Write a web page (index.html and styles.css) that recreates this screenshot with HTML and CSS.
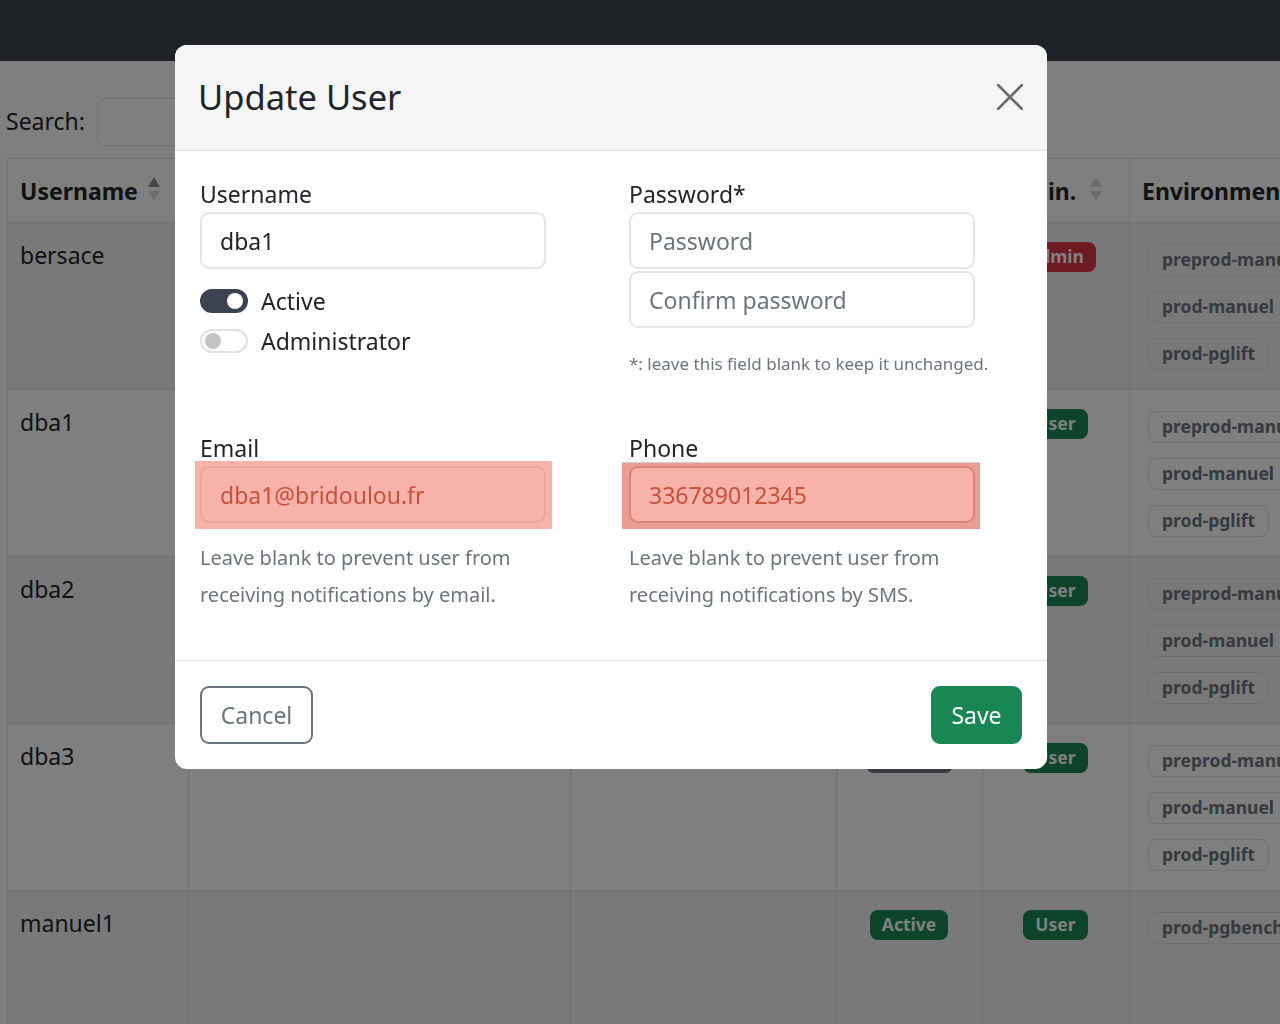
FILE: index.html
```html
<!DOCTYPE html>
<html lang="en">
<head>
<meta charset="utf-8">
<title>Users</title>
<link rel="stylesheet" href="styles.css">
</head>
<body>
<nav class="navbar"></nav>
<main class="content">
  <div class="search">
    <label class="search-label">Search:</label>
    <input class="search-input" type="search">
  </div>
  <table class="users">
    <colgroup>
      <col class="c1"><col class="c2"><col class="c3"><col class="c4"><col class="c5"><col class="c6">
    </colgroup>
    <thead>
      <tr>
        <th><div class="th-inner"><span>Username</span><svg class="sort" width="12" height="28" viewBox="0 0 12 28"><polygon points="6,0 12,10 0,10" fill="#8a8d90"/><polygon points="0,14 12,14 6,24" fill="#d6d8da"/></svg></div></th>
        <th></th>
        <th></th>
        <th></th>
        <th><div class="th-inner th-right"><span>Admin.</span><svg class="sort" width="12" height="28" viewBox="0 0 12 28"><polygon points="6,0 12,10 0,10" fill="#d6d8da"/><polygon points="0,14 12,14 6,24" fill="#d6d8da"/></svg></div></th>
        <th><div class="th-inner"><span>Environments</span></div></th>
      </tr>
    </thead>
    <tbody>
      <tr>
        <td>bersace</td><td></td><td></td>
        <td class="center"></td>
        <td class="center"><span class="badge bg-danger">Admin</span></td>
        <td><div class="envs"><span class="env">preprod-manuel</span><span class="env">prod-manuel</span><span class="env">prod-pglift</span></div></td>
      </tr>
      <tr>
        <td>dba1</td><td></td><td></td>
        <td class="center"></td>
        <td class="center"><span class="badge bg-success">User</span></td>
        <td><div class="envs"><span class="env">preprod-manuel</span><span class="env">prod-manuel</span><span class="env">prod-pglift</span></div></td>
      </tr>
      <tr>
        <td>dba2</td><td></td><td></td>
        <td class="center"></td>
        <td class="center"><span class="badge bg-success">User</span></td>
        <td><div class="envs"><span class="env">preprod-manuel</span><span class="env">prod-manuel</span><span class="env">prod-pglift</span></div></td>
      </tr>
      <tr>
        <td>dba3</td><td></td><td></td>
        <td class="center"><span class="badge bg-secondary badge-hidden"></span></td>
        <td class="center"><span class="badge bg-success">User</span></td>
        <td><div class="envs"><span class="env">preprod-manuel</span><span class="env">prod-manuel</span><span class="env">prod-pglift</span></div></td>
      </tr>
      <tr>
        <td>manuel1</td><td></td><td></td>
        <td class="center"><span class="badge bg-success">Active</span></td>
        <td class="center"><span class="badge bg-success">User</span></td>
        <td><div class="envs"><span class="env">prod-pgbench</span></div></td>
      </tr>
    </tbody>
  </table>
</main>

<div class="backdrop"></div>

<div class="modal">
  <div class="modal-header">
    <h4 class="modal-title">Update User</h4>
    <button class="btn-close" type="button" aria-label="Close">
      <svg width="26" height="26" viewBox="0 0 26 26"><path d="M1 1 L25 25 M25 1 L1 25" stroke="#6c6c6c" stroke-width="2.6" stroke-linecap="round" fill="none"/></svg>
    </button>
  </div>
  <div class="modal-body">
    <div class="col">
      <label class="form-label">Username</label>
      <input class="form-control" type="text" value="dba1">
      <div class="check first">
        <span class="switch on"><span class="knob"></span></span>
        <span>Active</span>
      </div>
      <div class="check">
        <span class="switch"><span class="knob"></span></span>
        <span>Administrator</span>
      </div>
    </div>
    <div class="col">
      <label class="form-label">Password*</label>
      <input class="form-control" type="password" placeholder="Password">
      <input class="form-control second" type="password" placeholder="Confirm password">
      <div class="note">*: leave this field blank to keep it unchanged.</div>
    </div>
    <div class="col">
      <label class="form-label">Email</label>
      <div class="hl hl-email-wrap"><input class="form-control hl-email" type="text" value="dba1@bridoulou.fr"></div>
      <div class="form-text">Leave blank to prevent user from receiving notifications by email.</div>
    </div>
    <div class="col">
      <label class="form-label">Phone</label>
      <div class="hl hl-phone-wrap"><input class="form-control hl-phone" type="text" value="336789012345"></div>
      <div class="form-text">Leave blank to prevent user from receiving notifications by SMS.</div>
    </div>
  </div>
  <div class="modal-footer">
    <button class="btn btn-cancel" type="button">Cancel</button>
    <button class="btn btn-save" type="button">Save</button>
  </div>
</div>
</body>
</html>
```
FILE: styles.css
```css
* { box-sizing: border-box; }
html, body { margin: 0; padding: 0; }
body {
  width: 1280px;
  height: 1024px;
  overflow: hidden;
  position: relative;
  background: #fff;
  color: #212529;
  font-family: "Noto Sans", "DejaVu Sans", sans-serif;
  font-size: 23px;
  line-height: 36px;
}

/* Page underneath */
.navbar {
  height: 61px;
  background: #1f2226;
  position: relative;
  z-index: 1050;
}
.content { padding-left: 7px; }
.search {
  display: flex;
  align-items: center;
  height: 48px;
  margin-top: 37px;
  margin-left: -1px;
}
.search-label { width: 91px; margin-top: -3px; }
.search-input {
  width: 330px;
  height: 48px;
  border: 1px solid #dee2e6;
  border-radius: 9px;
  background: #fff;
}
.users {
  margin-top: 12px;
  border-collapse: collapse;
  table-layout: fixed;
  width: 1481px;
}
.c1 { width: 181px; }
.c2 { width: 382px; }
.c3 { width: 266px; }
.c4 { width: 146px; }
.c5 { width: 147px; }
.c6 { width: 359px; }
.users th, .users td {
  border: 1px solid #dee2e6;
  text-align: left;
  vertical-align: top;
  padding: 14px 13px 12px 12px;
}
.users thead tr { height: 64px; }
.users th {
  font-weight: 700;
  vertical-align: middle;
  padding: 0 28px 0 12px;
  white-space: nowrap;
}
.th-inner {
  display: flex;
  align-items: center;
  justify-content: space-between;
}
.th-right span { margin-left: auto; margin-right: 14px; }
.sort { flex: none; }
.users tbody tr { height: 167px; }
.users tbody tr:nth-child(odd) td { background: #f3f3f3; }
.users td.center { text-align: center; padding-top: 19px; }
.badge {
  display: inline-block;
  vertical-align: top;
  font-size: 17.5px;
  font-weight: 700;
  line-height: 1;
  color: #fff;
  padding: 6px 12px;
  border-radius: 8px;
}
.badge-hidden { width: 87px; height: 30px; }
.bg-success { background: #198754; }
.bg-danger { background: #dc3545; }
.bg-secondary { background: #6c757d; }
.envs {
  display: flex;
  flex-direction: column;
  align-items: flex-start;
  gap: 15px;
  padding: 7px 0 0 6px;
}
.env {
  display: inline-flex;
  align-items: center;
  height: 32px;
  padding: 0 13px;
  border: 1px solid #dee2e6;
  border-radius: 9px;
  font-size: 17.5px;
  font-weight: 700;
  line-height: 1;
  color: #6c757d;
  white-space: nowrap;
}

/* Backdrop */
.backdrop {
  position: fixed;
  inset: 0;
  background: rgba(0, 0, 0, 0.5);
  z-index: 1040;
}

/* Modal */
.modal {
  position: absolute;
  left: 175px;
  top: 45px;
  width: 872px;
  height: 724px;
  background: #fff;
  border-radius: 12px;
  overflow: hidden;
  z-index: 1060;
  display: flex;
  flex-direction: column;
}
.modal-header {
  flex: none;
  height: 106px;
  background: #f5f5f5;
  border-bottom: 1px solid #dee2e6;
  display: flex;
  align-items: center;
  justify-content: space-between;
  padding: 0 24px 2px 23px;
}
.modal-title {
  margin: 0;
  font-size: 34.5px;
  font-weight: 400;
  line-height: 1.2;
  color: #212529;
}
.btn-close {
  width: 26px;
  height: 26px;
  padding: 0;
  border: 0;
  background: transparent;
  display: flex;
}
.modal-body {
  flex: 1;
  display: grid;
  grid-template-columns: 429px 346px;
  row-gap: 54px;
  align-content: start;
  padding: 25px 24px 0 25px;
}
.col { display: flex; flex-direction: column; align-items: flex-start; }
.form-label { display: block; line-height: 36px; }
.form-control {
  width: 346px;
  height: 57px;
  border: 2px solid #e2e5e9;
  border-radius: 9px;
  padding: 0 18px;
  font-family: inherit;
  font-size: 23px;
  color: #212529;
  background: #fff;
  outline: none;
}
.form-control::placeholder { color: #6c757d; opacity: 1; }
.form-control.second { margin-top: 2px; }
.check {
  display: flex;
  align-items: center;
  gap: 13px;
  height: 36px;
  margin-top: 4px;
}
.check.first { margin-top: 14px; }
.switch {
  position: relative;
  width: 48px;
  height: 24px;
  border-radius: 12px;
  border: 2px solid #dee2e6;
  background: #fff;
  flex: none;
}
.switch .knob {
  position: absolute;
  top: 2px;
  left: 3px;
  width: 16px;
  height: 16px;
  border-radius: 50%;
  background: #c4c4c4;
}
.switch.on { background: #3b4350; border-color: #3b4350; }
.switch.on .knob { left: auto; right: 3px; background: #fff; }
.note {
  margin-top: 24px;
  font-size: 17px;
  line-height: 24px;
  color: #6c757d;
  white-space: nowrap;
}
.form-text {
  margin-top: 16px;
  font-size: 20px;
  line-height: 37px;
  color: #6c757d;
  width: 346px;
}
.hl { display: flex; }
.hl-email-wrap {
  background: #f7b3a9;
  padding: 5px 6px 6px 5px;
  margin: -5px -6px -6px -5px;
}
.hl-phone-wrap {
  background: #e99d93;
  padding: 3px 5px 6px 7px;
  margin: -4px -5px -6px -7px;
  border-top: 1px solid #cfcfcf;
}
.hl-email {
  background: #f7b3a9;
  border-color: #eda69c;
  color: #c6513c;
}
.hl-phone {
  background: #f7b3a9;
  border-color: #dd8377;
  color: #c6513c;
}
.modal-footer {
  flex: none;
  height: 109px;
  border-top: 1px solid #dee2e6;
  display: flex;
  align-items: center;
  justify-content: space-between;
  padding: 0 25px 0 25px;
}
.btn {
  height: 58px;
  border-radius: 9px;
  font-family: inherit;
  font-size: 23px;
  padding: 0 18px;
  cursor: pointer;
}
.btn-cancel {
  width: 113px;
  border: 2px solid #6c757d;
  background: #fff;
  color: #6c757d;
}
.btn-save {
  width: 91px;
  border: 2px solid #198754;
  background: #198754;
  color: #fff;
}
```
